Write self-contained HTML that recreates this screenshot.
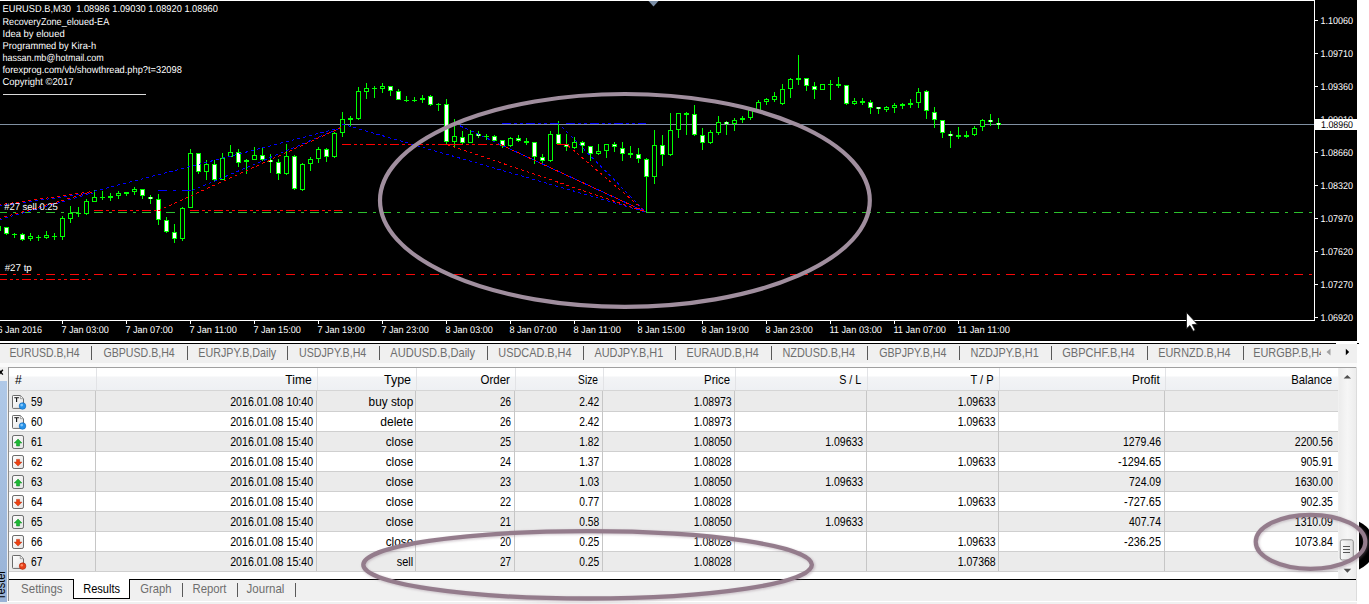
<!DOCTYPE html>
<html><head><meta charset="utf-8"><title>Tester</title>
<style>
html,body{margin:0;padding:0;background:#fff;}
body{width:1369px;height:604px;overflow:hidden;position:relative;font-family:"Liberation Sans",sans-serif;}
.abs{position:absolute;}
#chart{left:0;top:0;width:1357px;height:341px;background:#000;}
#tabs{left:0;top:344px;width:1357px;height:19px;background:#f0f0f0;}
#term{left:0;top:363px;width:1357px;height:238px;background:#f0f0f0;}
#strip{left:0;top:381px;width:7px;height:221px;background:linear-gradient(#b0c9e8,#98b2d6);}
#tbl{left:9px;top:368px;width:1329px;height:211px;background:#fff;}
.hdr{left:0;top:0;width:1329px;height:22px;background:linear-gradient(#fff 0,#fff 8px,#f3f4f6 9px,#eef0f3 22px);border-bottom:1px solid #d5d5d5;}
.row{left:0;width:1329px;height:20px;border-bottom:1px solid #cfcfcf;box-sizing:border-box;}
.odd{background:#ebebeb;}
.even{background:#fff;}
.vs{top:23px;width:1px;height:180px;background:#c6c6c6;}
.hs{top:0px;width:1px;height:22px;background:#e2e3e6;}
#sb{left:1339px;top:368px;width:17px;height:211px;background:linear-gradient(90deg,#ececec,#f6f6f6 50%,#ececec);}
svg{position:absolute;left:0;top:0;}
svg text{font-family:"Liberation Sans",sans-serif;}
</style></head><body>

<div id="chart" class="abs"></div>
<div class="abs" style="left:0;top:343px;width:1336px;height:1px;background:#000"></div>
<div class="abs" style="left:1357px;top:343px;width:2px;height:1px;background:#000"></div>
<div id="tabs" class="abs"></div>
<div id="term" class="abs"></div>
<div class="abs" style="left:0;top:363px;width:1357px;height:4px;background:#fafafa"></div>
<div class="abs" style="left:8px;top:367px;width:1349px;height:1px;background:#a0a0a0"></div>
<div class="abs" style="left:8px;top:367px;width:1px;height:234px;background:#8c8c8c"></div>
<div id="strip" class="abs"></div>
<div class="abs" style="left:1356px;top:367px;width:1px;height:234px;background:#dcdcdc"></div>
<div id="tbl" class="abs">
<div class="abs hdr"></div>
<div class="abs" style="left:0;top:23px;width:1329px;height:1px;background:#ebebeb"></div>
<div class="abs row odd" style="top:24px"></div>
<div class="abs row even" style="top:44px"></div>
<div class="abs row odd" style="top:64px"></div>
<div class="abs row even" style="top:84px"></div>
<div class="abs row odd" style="top:104px"></div>
<div class="abs row even" style="top:124px"></div>
<div class="abs row odd" style="top:144px"></div>
<div class="abs row even" style="top:164px"></div>
<div class="abs row odd" style="top:184px"></div>
<div class="abs vs" style="left:86px"></div>
<div class="abs hs" style="left:87px"></div>
<div class="abs vs" style="left:307px"></div>
<div class="abs hs" style="left:308px"></div>
<div class="abs vs" style="left:406px"></div>
<div class="abs hs" style="left:407px"></div>
<div class="abs vs" style="left:505px"></div>
<div class="abs hs" style="left:506px"></div>
<div class="abs vs" style="left:593px"></div>
<div class="abs hs" style="left:594px"></div>
<div class="abs vs" style="left:725px"></div>
<div class="abs hs" style="left:726px"></div>
<div class="abs vs" style="left:857px"></div>
<div class="abs hs" style="left:858px"></div>
<div class="abs vs" style="left:989px"></div>
<div class="abs hs" style="left:990px"></div>
<div class="abs vs" style="left:1155px"></div>
<div class="abs hs" style="left:1156px"></div>
</div>
<div id="sb" class="abs"></div>
<div class="abs" style="left:0;top:602px;width:1357px;height:2px;background:#f0f0f0"></div>
<div class="abs" style="left:9px;top:579px;width:1347px;height:1px;background:#000"></div>
<div class="abs" style="left:9px;top:580px;width:1347px;height:21px;background:#f0f0f0"></div>
<div class="abs" style="left:73px;top:579px;width:57px;height:20px;background:#fff;border:1px solid #000;border-top:none;box-sizing:border-box"></div>
<svg width="1369" height="604" viewBox="0 0 1369 604">
<g shape-rendering="crispEdges">
<rect x="0" y="0" width="1315" height="1" fill="#fff"/>
<rect x="1314" y="0" width="1" height="321" fill="#fff"/>
<rect x="0" y="320" width="1315" height="1" fill="#fff"/>
<rect x="1315" y="20" width="3" height="1" fill="#fff"/>
<rect x="1315" y="53" width="3" height="1" fill="#fff"/>
<rect x="1315" y="86" width="3" height="1" fill="#fff"/>
<rect x="1315" y="119" width="3" height="1" fill="#fff"/>
<rect x="1315" y="152" width="3" height="1" fill="#fff"/>
<rect x="1315" y="185" width="3" height="1" fill="#fff"/>
<rect x="1315" y="218" width="3" height="1" fill="#fff"/>
<rect x="1315" y="251" width="3" height="1" fill="#fff"/>
<rect x="1315" y="284" width="3" height="1" fill="#fff"/>
<rect x="1315" y="317" width="3" height="1" fill="#fff"/>
<rect x="62" y="321" width="1" height="3" fill="#fff"/>
<rect x="126" y="321" width="1" height="3" fill="#fff"/>
<rect x="190" y="321" width="1" height="3" fill="#fff"/>
<rect x="254" y="321" width="1" height="3" fill="#fff"/>
<rect x="318" y="321" width="1" height="3" fill="#fff"/>
<rect x="382" y="321" width="1" height="3" fill="#fff"/>
<rect x="446" y="321" width="1" height="3" fill="#fff"/>
<rect x="510" y="321" width="1" height="3" fill="#fff"/>
<rect x="574" y="321" width="1" height="3" fill="#fff"/>
<rect x="638" y="321" width="1" height="3" fill="#fff"/>
<rect x="702" y="321" width="1" height="3" fill="#fff"/>
<rect x="766" y="321" width="1" height="3" fill="#fff"/>
<rect x="830" y="321" width="1" height="3" fill="#fff"/>
<rect x="894" y="321" width="1" height="3" fill="#fff"/>
<rect x="958" y="321" width="1" height="3" fill="#fff"/>
</g>
<path d="M648.5 1 L658.5 1 L653.5 6.5 Z" fill="#7b8ea6"/>
<g shape-rendering="crispEdges" fill="none">
<line x1="0" y1="212.5" x2="1314" y2="212.5" stroke="#2cc02c" stroke-width="1" stroke-dasharray="9 6 3 6" stroke-dashoffset="2"/>
<line x1="0" y1="274.5" x2="1314" y2="274.5" stroke="#f80808" stroke-width="1" stroke-dasharray="9 6 3 6" stroke-dashoffset="2"/>
<line x1="0" y1="124.5" x2="1314" y2="124.5" stroke="#8090a2" stroke-width="1"/>
</g>
<g shape-rendering="crispEdges">
<rect x="-4" y="226" width="5" height="5" fill="#00ff00"/>
<rect x="6" y="227" width="1" height="8" fill="#00ff00"/>
<rect x="4" y="227" width="5" height="7" fill="#00ff00"/>
<rect x="5" y="228" width="3" height="5" fill="#fff"/>
<rect x="14" y="233" width="1" height="5" fill="#00ff00"/>
<rect x="12" y="234" width="5" height="1" fill="#00ff00"/>
<rect x="22" y="233" width="1" height="8" fill="#00ff00"/>
<rect x="20" y="234" width="5" height="6" fill="#00ff00"/>
<rect x="21" y="235" width="3" height="4" fill="#fff"/>
<rect x="30" y="233" width="1" height="8" fill="#00ff00"/>
<rect x="28" y="236" width="5" height="3" fill="#00ff00"/>
<rect x="29" y="237" width="3" height="1" fill="#000"/>
<rect x="38" y="235" width="1" height="6" fill="#00ff00"/>
<rect x="36" y="237" width="5" height="1" fill="#00ff00"/>
<rect x="46" y="231" width="1" height="8" fill="#00ff00"/>
<rect x="44" y="235" width="5" height="3" fill="#00ff00"/>
<rect x="45" y="236" width="3" height="1" fill="#000"/>
<rect x="54" y="233" width="1" height="7" fill="#00ff00"/>
<rect x="52" y="236" width="5" height="1" fill="#00ff00"/>
<rect x="62" y="216" width="1" height="24" fill="#00ff00"/>
<rect x="60" y="218" width="5" height="19" fill="#00ff00"/>
<rect x="61" y="219" width="3" height="17" fill="#000"/>
<rect x="70" y="206" width="1" height="17" fill="#00ff00"/>
<rect x="68" y="213" width="5" height="6" fill="#00ff00"/>
<rect x="69" y="214" width="3" height="4" fill="#000"/>
<rect x="78" y="207" width="1" height="10" fill="#00ff00"/>
<rect x="76" y="213" width="5" height="1" fill="#00ff00"/>
<rect x="86" y="199" width="1" height="16" fill="#00ff00"/>
<rect x="84" y="201" width="5" height="13" fill="#00ff00"/>
<rect x="85" y="202" width="3" height="11" fill="#000"/>
<rect x="94" y="190" width="1" height="12" fill="#00ff00"/>
<rect x="92" y="197" width="5" height="5" fill="#00ff00"/>
<rect x="93" y="198" width="3" height="3" fill="#000"/>
<rect x="102" y="191" width="1" height="9" fill="#00ff00"/>
<rect x="100" y="197" width="5" height="1" fill="#00ff00"/>
<rect x="110" y="193" width="1" height="8" fill="#00ff00"/>
<rect x="108" y="196" width="5" height="2" fill="#00ff00"/>
<rect x="118" y="191" width="1" height="8" fill="#00ff00"/>
<rect x="116" y="193" width="5" height="3" fill="#00ff00"/>
<rect x="117" y="194" width="3" height="1" fill="#000"/>
<rect x="126" y="192" width="1" height="4" fill="#00ff00"/>
<rect x="124" y="192" width="5" height="2" fill="#00ff00"/>
<rect x="134" y="187" width="1" height="8" fill="#00ff00"/>
<rect x="132" y="189" width="5" height="3" fill="#00ff00"/>
<rect x="133" y="190" width="3" height="1" fill="#000"/>
<rect x="142" y="189" width="1" height="10" fill="#00ff00"/>
<rect x="140" y="189" width="5" height="7" fill="#00ff00"/>
<rect x="141" y="190" width="3" height="5" fill="#fff"/>
<rect x="150" y="195" width="1" height="9" fill="#00ff00"/>
<rect x="148" y="197" width="5" height="2" fill="#00ff00"/>
<rect x="149" y="197" width="3" height="2" fill="#c8ffc8"/>
<rect x="158" y="194" width="1" height="31" fill="#00ff00"/>
<rect x="156" y="199" width="5" height="21" fill="#00ff00"/>
<rect x="157" y="200" width="3" height="19" fill="#fff"/>
<rect x="166" y="217" width="1" height="16" fill="#00ff00"/>
<rect x="164" y="220" width="5" height="12" fill="#00ff00"/>
<rect x="165" y="221" width="3" height="10" fill="#fff"/>
<rect x="174" y="224" width="1" height="19" fill="#00ff00"/>
<rect x="172" y="232" width="5" height="7" fill="#00ff00"/>
<rect x="173" y="233" width="3" height="5" fill="#fff"/>
<rect x="182" y="207" width="1" height="34" fill="#00ff00"/>
<rect x="180" y="208" width="5" height="31" fill="#00ff00"/>
<rect x="181" y="209" width="3" height="29" fill="#000"/>
<rect x="190" y="149" width="1" height="59" fill="#00ff00"/>
<rect x="188" y="153" width="5" height="55" fill="#00ff00"/>
<rect x="189" y="154" width="3" height="53" fill="#000"/>
<rect x="198" y="153" width="1" height="21" fill="#00ff00"/>
<rect x="196" y="153" width="5" height="19" fill="#00ff00"/>
<rect x="197" y="154" width="3" height="17" fill="#fff"/>
<rect x="206" y="160" width="1" height="20" fill="#00ff00"/>
<rect x="204" y="164" width="5" height="8" fill="#00ff00"/>
<rect x="205" y="165" width="3" height="6" fill="#000"/>
<rect x="214" y="160" width="1" height="22" fill="#00ff00"/>
<rect x="212" y="164" width="5" height="16" fill="#00ff00"/>
<rect x="213" y="165" width="3" height="14" fill="#fff"/>
<rect x="222" y="153" width="1" height="27" fill="#00ff00"/>
<rect x="220" y="158" width="5" height="22" fill="#00ff00"/>
<rect x="221" y="159" width="3" height="20" fill="#000"/>
<rect x="230" y="145" width="1" height="12" fill="#00ff00"/>
<rect x="228" y="152" width="5" height="5" fill="#00ff00"/>
<rect x="229" y="153" width="3" height="3" fill="#000"/>
<rect x="238" y="149" width="1" height="18" fill="#00ff00"/>
<rect x="236" y="152" width="5" height="11" fill="#00ff00"/>
<rect x="237" y="153" width="3" height="9" fill="#fff"/>
<rect x="246" y="159" width="1" height="15" fill="#00ff00"/>
<rect x="244" y="160" width="5" height="2" fill="#00ff00"/>
<rect x="254" y="147" width="1" height="13" fill="#00ff00"/>
<rect x="252" y="155" width="5" height="5" fill="#00ff00"/>
<rect x="253" y="156" width="3" height="3" fill="#000"/>
<rect x="262" y="148" width="1" height="13" fill="#00ff00"/>
<rect x="260" y="155" width="5" height="5" fill="#00ff00"/>
<rect x="261" y="156" width="3" height="3" fill="#fff"/>
<rect x="270" y="154" width="1" height="19" fill="#00ff00"/>
<rect x="268" y="160" width="5" height="2" fill="#00ff00"/>
<rect x="269" y="160" width="3" height="2" fill="#c8ffc8"/>
<rect x="278" y="159" width="1" height="21" fill="#00ff00"/>
<rect x="276" y="162" width="5" height="12" fill="#00ff00"/>
<rect x="277" y="163" width="3" height="10" fill="#fff"/>
<rect x="286" y="144" width="1" height="31" fill="#00ff00"/>
<rect x="284" y="156" width="5" height="18" fill="#00ff00"/>
<rect x="285" y="157" width="3" height="16" fill="#000"/>
<rect x="294" y="155" width="1" height="35" fill="#00ff00"/>
<rect x="292" y="156" width="5" height="33" fill="#00ff00"/>
<rect x="293" y="157" width="3" height="31" fill="#fff"/>
<rect x="302" y="163" width="1" height="28" fill="#00ff00"/>
<rect x="300" y="164" width="5" height="26" fill="#00ff00"/>
<rect x="301" y="165" width="3" height="24" fill="#000"/>
<rect x="310" y="157" width="1" height="14" fill="#00ff00"/>
<rect x="308" y="159" width="5" height="5" fill="#00ff00"/>
<rect x="309" y="160" width="3" height="3" fill="#000"/>
<rect x="318" y="147" width="1" height="16" fill="#00ff00"/>
<rect x="316" y="149" width="5" height="10" fill="#00ff00"/>
<rect x="317" y="150" width="3" height="8" fill="#000"/>
<rect x="326" y="148" width="1" height="14" fill="#00ff00"/>
<rect x="324" y="149" width="5" height="8" fill="#00ff00"/>
<rect x="325" y="150" width="3" height="6" fill="#fff"/>
<rect x="334" y="132" width="1" height="26" fill="#00ff00"/>
<rect x="332" y="133" width="5" height="24" fill="#00ff00"/>
<rect x="333" y="134" width="3" height="22" fill="#000"/>
<rect x="342" y="112" width="1" height="25" fill="#00ff00"/>
<rect x="340" y="119" width="5" height="14" fill="#00ff00"/>
<rect x="341" y="120" width="3" height="12" fill="#000"/>
<rect x="350" y="116" width="1" height="11" fill="#00ff00"/>
<rect x="348" y="118" width="5" height="2" fill="#00ff00"/>
<rect x="358" y="87" width="1" height="33" fill="#00ff00"/>
<rect x="356" y="91" width="5" height="28" fill="#00ff00"/>
<rect x="357" y="92" width="3" height="26" fill="#000"/>
<rect x="366" y="83" width="1" height="16" fill="#00ff00"/>
<rect x="364" y="88" width="5" height="4" fill="#00ff00"/>
<rect x="365" y="89" width="3" height="2" fill="#000"/>
<rect x="374" y="86" width="1" height="12" fill="#00ff00"/>
<rect x="372" y="88" width="5" height="1" fill="#00ff00"/>
<rect x="382" y="83" width="1" height="10" fill="#00ff00"/>
<rect x="380" y="86" width="5" height="3" fill="#00ff00"/>
<rect x="381" y="87" width="3" height="1" fill="#000"/>
<rect x="390" y="86" width="1" height="10" fill="#00ff00"/>
<rect x="388" y="86" width="5" height="5" fill="#00ff00"/>
<rect x="389" y="87" width="3" height="3" fill="#fff"/>
<rect x="398" y="89" width="1" height="11" fill="#00ff00"/>
<rect x="396" y="91" width="5" height="9" fill="#00ff00"/>
<rect x="397" y="92" width="3" height="7" fill="#fff"/>
<rect x="406" y="96" width="1" height="6" fill="#00ff00"/>
<rect x="404" y="100" width="5" height="1" fill="#00ff00"/>
<rect x="414" y="97" width="1" height="5" fill="#00ff00"/>
<rect x="412" y="100" width="5" height="1" fill="#00ff00"/>
<rect x="422" y="95" width="1" height="8" fill="#00ff00"/>
<rect x="420" y="98" width="5" height="2" fill="#00ff00"/>
<rect x="430" y="95" width="1" height="11" fill="#00ff00"/>
<rect x="428" y="96" width="5" height="9" fill="#00ff00"/>
<rect x="429" y="97" width="3" height="7" fill="#fff"/>
<rect x="438" y="103" width="1" height="8" fill="#00ff00"/>
<rect x="436" y="104" width="5" height="1" fill="#00ff00"/>
<rect x="446" y="99" width="1" height="45" fill="#00ff00"/>
<rect x="444" y="104" width="5" height="38" fill="#00ff00"/>
<rect x="445" y="105" width="3" height="36" fill="#fff"/>
<rect x="454" y="119" width="1" height="29" fill="#00ff00"/>
<rect x="452" y="136" width="5" height="6" fill="#00ff00"/>
<rect x="453" y="137" width="3" height="4" fill="#000"/>
<rect x="462" y="131" width="1" height="13" fill="#00ff00"/>
<rect x="460" y="137" width="5" height="6" fill="#00ff00"/>
<rect x="461" y="138" width="3" height="4" fill="#fff"/>
<rect x="470" y="130" width="1" height="13" fill="#00ff00"/>
<rect x="468" y="134" width="5" height="9" fill="#00ff00"/>
<rect x="469" y="135" width="3" height="7" fill="#000"/>
<rect x="478" y="131" width="1" height="7" fill="#00ff00"/>
<rect x="476" y="134" width="5" height="2" fill="#00ff00"/>
<rect x="477" y="134" width="3" height="2" fill="#c8ffc8"/>
<rect x="486" y="134" width="1" height="6" fill="#00ff00"/>
<rect x="484" y="136" width="5" height="1" fill="#00ff00"/>
<rect x="494" y="135" width="1" height="7" fill="#00ff00"/>
<rect x="492" y="136" width="5" height="5" fill="#00ff00"/>
<rect x="493" y="137" width="3" height="3" fill="#fff"/>
<rect x="502" y="140" width="1" height="8" fill="#00ff00"/>
<rect x="500" y="140" width="5" height="6" fill="#00ff00"/>
<rect x="501" y="141" width="3" height="4" fill="#fff"/>
<rect x="510" y="137" width="1" height="10" fill="#00ff00"/>
<rect x="508" y="138" width="5" height="8" fill="#00ff00"/>
<rect x="509" y="139" width="3" height="6" fill="#000"/>
<rect x="518" y="135" width="1" height="7" fill="#00ff00"/>
<rect x="516" y="138" width="5" height="3" fill="#00ff00"/>
<rect x="517" y="139" width="3" height="1" fill="#fff"/>
<rect x="526" y="138" width="1" height="7" fill="#00ff00"/>
<rect x="524" y="141" width="5" height="2" fill="#00ff00"/>
<rect x="534" y="142" width="1" height="22" fill="#00ff00"/>
<rect x="532" y="142" width="5" height="15" fill="#00ff00"/>
<rect x="533" y="143" width="3" height="13" fill="#fff"/>
<rect x="542" y="154" width="1" height="10" fill="#00ff00"/>
<rect x="540" y="157" width="5" height="4" fill="#00ff00"/>
<rect x="541" y="158" width="3" height="2" fill="#fff"/>
<rect x="550" y="131" width="1" height="31" fill="#00ff00"/>
<rect x="548" y="134" width="5" height="27" fill="#00ff00"/>
<rect x="549" y="135" width="3" height="25" fill="#000"/>
<rect x="558" y="121" width="1" height="23" fill="#00ff00"/>
<rect x="556" y="134" width="5" height="10" fill="#00ff00"/>
<rect x="557" y="135" width="3" height="8" fill="#fff"/>
<rect x="566" y="134" width="1" height="17" fill="#00ff00"/>
<rect x="564" y="144" width="5" height="3" fill="#00ff00"/>
<rect x="565" y="145" width="3" height="1" fill="#fff"/>
<rect x="574" y="137" width="1" height="12" fill="#00ff00"/>
<rect x="572" y="142" width="5" height="6" fill="#00ff00"/>
<rect x="573" y="143" width="3" height="4" fill="#000"/>
<rect x="582" y="141" width="1" height="12" fill="#00ff00"/>
<rect x="580" y="142" width="5" height="4" fill="#00ff00"/>
<rect x="581" y="143" width="3" height="2" fill="#fff"/>
<rect x="590" y="146" width="1" height="15" fill="#00ff00"/>
<rect x="588" y="146" width="5" height="8" fill="#00ff00"/>
<rect x="589" y="147" width="3" height="6" fill="#fff"/>
<rect x="598" y="144" width="1" height="11" fill="#00ff00"/>
<rect x="596" y="151" width="5" height="3" fill="#00ff00"/>
<rect x="597" y="152" width="3" height="1" fill="#000"/>
<rect x="606" y="144" width="1" height="14" fill="#00ff00"/>
<rect x="604" y="144" width="5" height="7" fill="#00ff00"/>
<rect x="605" y="145" width="3" height="5" fill="#000"/>
<rect x="614" y="142" width="1" height="10" fill="#00ff00"/>
<rect x="612" y="144" width="5" height="3" fill="#00ff00"/>
<rect x="613" y="145" width="3" height="1" fill="#fff"/>
<rect x="622" y="142" width="1" height="19" fill="#00ff00"/>
<rect x="620" y="148" width="5" height="6" fill="#00ff00"/>
<rect x="621" y="149" width="3" height="4" fill="#fff"/>
<rect x="630" y="146" width="1" height="12" fill="#00ff00"/>
<rect x="628" y="153" width="5" height="2" fill="#00ff00"/>
<rect x="638" y="148" width="1" height="15" fill="#00ff00"/>
<rect x="636" y="154" width="5" height="5" fill="#00ff00"/>
<rect x="637" y="155" width="3" height="3" fill="#fff"/>
<rect x="646" y="158" width="1" height="54" fill="#00ff00"/>
<rect x="644" y="159" width="5" height="18" fill="#00ff00"/>
<rect x="645" y="160" width="3" height="16" fill="#fff"/>
<rect x="654" y="130" width="1" height="54" fill="#00ff00"/>
<rect x="652" y="145" width="5" height="32" fill="#00ff00"/>
<rect x="653" y="146" width="3" height="30" fill="#000"/>
<rect x="662" y="135" width="1" height="31" fill="#00ff00"/>
<rect x="660" y="145" width="5" height="10" fill="#00ff00"/>
<rect x="661" y="146" width="3" height="8" fill="#fff"/>
<rect x="670" y="113" width="1" height="43" fill="#00ff00"/>
<rect x="668" y="130" width="5" height="25" fill="#00ff00"/>
<rect x="669" y="131" width="3" height="23" fill="#000"/>
<rect x="678" y="113" width="1" height="25" fill="#00ff00"/>
<rect x="676" y="113" width="5" height="17" fill="#00ff00"/>
<rect x="677" y="114" width="3" height="15" fill="#000"/>
<rect x="686" y="112" width="1" height="23" fill="#00ff00"/>
<rect x="684" y="113" width="5" height="2" fill="#00ff00"/>
<rect x="694" y="105" width="1" height="31" fill="#00ff00"/>
<rect x="692" y="114" width="5" height="21" fill="#00ff00"/>
<rect x="693" y="115" width="3" height="19" fill="#fff"/>
<rect x="702" y="128" width="1" height="22" fill="#00ff00"/>
<rect x="700" y="135" width="5" height="8" fill="#00ff00"/>
<rect x="701" y="136" width="3" height="6" fill="#fff"/>
<rect x="710" y="130" width="1" height="14" fill="#00ff00"/>
<rect x="708" y="132" width="5" height="11" fill="#00ff00"/>
<rect x="709" y="133" width="3" height="9" fill="#000"/>
<rect x="718" y="116" width="1" height="19" fill="#00ff00"/>
<rect x="716" y="122" width="5" height="11" fill="#00ff00"/>
<rect x="717" y="123" width="3" height="9" fill="#000"/>
<rect x="726" y="121" width="1" height="14" fill="#00ff00"/>
<rect x="724" y="122" width="5" height="2" fill="#00ff00"/>
<rect x="725" y="122" width="3" height="2" fill="#c8ffc8"/>
<rect x="734" y="118" width="1" height="13" fill="#00ff00"/>
<rect x="732" y="120" width="5" height="4" fill="#00ff00"/>
<rect x="733" y="121" width="3" height="2" fill="#000"/>
<rect x="742" y="116" width="1" height="7" fill="#00ff00"/>
<rect x="740" y="118" width="5" height="2" fill="#00ff00"/>
<rect x="750" y="110" width="1" height="10" fill="#00ff00"/>
<rect x="748" y="110" width="5" height="8" fill="#00ff00"/>
<rect x="749" y="111" width="3" height="6" fill="#000"/>
<rect x="758" y="100" width="1" height="11" fill="#00ff00"/>
<rect x="756" y="102" width="5" height="9" fill="#00ff00"/>
<rect x="757" y="103" width="3" height="7" fill="#000"/>
<rect x="766" y="98" width="1" height="7" fill="#00ff00"/>
<rect x="764" y="99" width="5" height="3" fill="#00ff00"/>
<rect x="765" y="100" width="3" height="1" fill="#000"/>
<rect x="774" y="92" width="1" height="10" fill="#00ff00"/>
<rect x="772" y="96" width="5" height="4" fill="#00ff00"/>
<rect x="773" y="97" width="3" height="2" fill="#000"/>
<rect x="782" y="84" width="1" height="21" fill="#00ff00"/>
<rect x="780" y="89" width="5" height="15" fill="#00ff00"/>
<rect x="781" y="90" width="3" height="13" fill="#000"/>
<rect x="790" y="78" width="1" height="20" fill="#00ff00"/>
<rect x="788" y="79" width="5" height="10" fill="#00ff00"/>
<rect x="789" y="80" width="3" height="8" fill="#000"/>
<rect x="798" y="55" width="1" height="30" fill="#00ff00"/>
<rect x="796" y="78" width="5" height="2" fill="#00ff00"/>
<rect x="806" y="78" width="1" height="13" fill="#00ff00"/>
<rect x="804" y="78" width="5" height="8" fill="#00ff00"/>
<rect x="805" y="79" width="3" height="6" fill="#fff"/>
<rect x="814" y="82" width="1" height="17" fill="#00ff00"/>
<rect x="812" y="86" width="5" height="4" fill="#00ff00"/>
<rect x="813" y="87" width="3" height="2" fill="#fff"/>
<rect x="822" y="84" width="1" height="6" fill="#00ff00"/>
<rect x="820" y="84" width="5" height="6" fill="#00ff00"/>
<rect x="821" y="85" width="3" height="4" fill="#000"/>
<rect x="830" y="80" width="1" height="20" fill="#00ff00"/>
<rect x="828" y="84" width="5" height="1" fill="#00ff00"/>
<rect x="838" y="77" width="1" height="11" fill="#00ff00"/>
<rect x="836" y="84" width="5" height="2" fill="#00ff00"/>
<rect x="846" y="85" width="1" height="20" fill="#00ff00"/>
<rect x="844" y="85" width="5" height="19" fill="#00ff00"/>
<rect x="845" y="86" width="3" height="17" fill="#fff"/>
<rect x="854" y="98" width="1" height="7" fill="#00ff00"/>
<rect x="852" y="101" width="5" height="3" fill="#00ff00"/>
<rect x="853" y="102" width="3" height="1" fill="#000"/>
<rect x="862" y="98" width="1" height="7" fill="#00ff00"/>
<rect x="860" y="101" width="5" height="2" fill="#00ff00"/>
<rect x="870" y="100" width="1" height="14" fill="#00ff00"/>
<rect x="868" y="102" width="5" height="6" fill="#00ff00"/>
<rect x="869" y="103" width="3" height="4" fill="#fff"/>
<rect x="878" y="107" width="1" height="7" fill="#00ff00"/>
<rect x="876" y="107" width="5" height="2" fill="#00ff00"/>
<rect x="877" y="107" width="3" height="2" fill="#c8ffc8"/>
<rect x="886" y="106" width="1" height="6" fill="#00ff00"/>
<rect x="884" y="107" width="5" height="3" fill="#00ff00"/>
<rect x="885" y="108" width="3" height="1" fill="#000"/>
<rect x="894" y="103" width="1" height="10" fill="#00ff00"/>
<rect x="892" y="105" width="5" height="3" fill="#00ff00"/>
<rect x="893" y="106" width="3" height="1" fill="#000"/>
<rect x="902" y="103" width="1" height="6" fill="#00ff00"/>
<rect x="900" y="104" width="5" height="2" fill="#00ff00"/>
<rect x="910" y="99" width="1" height="9" fill="#00ff00"/>
<rect x="908" y="103" width="5" height="2" fill="#00ff00"/>
<rect x="918" y="88" width="1" height="20" fill="#00ff00"/>
<rect x="916" y="92" width="5" height="11" fill="#00ff00"/>
<rect x="917" y="93" width="3" height="9" fill="#000"/>
<rect x="926" y="90" width="1" height="29" fill="#00ff00"/>
<rect x="924" y="91" width="5" height="20" fill="#00ff00"/>
<rect x="925" y="92" width="3" height="18" fill="#fff"/>
<rect x="934" y="107" width="1" height="21" fill="#00ff00"/>
<rect x="932" y="112" width="5" height="8" fill="#00ff00"/>
<rect x="933" y="113" width="3" height="6" fill="#fff"/>
<rect x="942" y="120" width="1" height="18" fill="#00ff00"/>
<rect x="940" y="120" width="5" height="13" fill="#00ff00"/>
<rect x="941" y="121" width="3" height="11" fill="#fff"/>
<rect x="950" y="131" width="1" height="17" fill="#00ff00"/>
<rect x="948" y="134" width="5" height="2" fill="#00ff00"/>
<rect x="949" y="134" width="3" height="2" fill="#c8ffc8"/>
<rect x="958" y="127" width="1" height="12" fill="#00ff00"/>
<rect x="956" y="135" width="5" height="2" fill="#00ff00"/>
<rect x="966" y="131" width="1" height="7" fill="#00ff00"/>
<rect x="964" y="135" width="5" height="2" fill="#00ff00"/>
<rect x="974" y="126" width="1" height="10" fill="#00ff00"/>
<rect x="972" y="128" width="5" height="7" fill="#00ff00"/>
<rect x="973" y="129" width="3" height="5" fill="#000"/>
<rect x="982" y="119" width="1" height="12" fill="#00ff00"/>
<rect x="980" y="120" width="5" height="7" fill="#00ff00"/>
<rect x="981" y="121" width="3" height="5" fill="#000"/>
<rect x="990" y="114" width="1" height="12" fill="#00ff00"/>
<rect x="988" y="120" width="5" height="2" fill="#00ff00"/>
<rect x="989" y="120" width="3" height="2" fill="#c8ffc8"/>
<rect x="998" y="118" width="1" height="11" fill="#00ff00"/>
<rect x="996" y="123" width="5" height="2" fill="#00ff00"/>
<rect x="997" y="123" width="3" height="2" fill="#c8ffc8"/>
</g>
<g shape-rendering="crispEdges" fill="none">
<line x1="0" y1="279.5" x2="92" y2="279.5" stroke="#ff0000" stroke-width="1" stroke-dasharray="9 3 3 3 3 3" stroke-dashoffset="2"/>
<line x1="94" y1="210.5" x2="161" y2="210.5" stroke="#ff0000" stroke-width="1" stroke-dasharray="9 3 3 3 3 3"/>
<line x1="190" y1="210.5" x2="342" y2="210.5" stroke="#ff0000" stroke-width="1" stroke-dasharray="9 3 3 3 3 3"/>
<line x1="342" y1="144.5" x2="453" y2="144.5" stroke="#ff0000" stroke-width="1" stroke-dasharray="9 3 3 3 3 3"/>
<line x1="454" y1="144.5" x2="501" y2="144.5" stroke="#ff0000" stroke-width="1" stroke-dasharray="9 3 3 3 3 3"/>
<line x1="447" y1="144.5" x2="463" y2="144.5" stroke="#ff0000" stroke-width="1"/>
<line x1="557" y1="144.5" x2="568" y2="144.5" stroke="#ff0000" stroke-width="1"/>
<line x1="502" y1="123.5" x2="559" y2="123.5" stroke="#0000ff" stroke-width="1" stroke-dasharray="9 3 3 3 3 3"/>
<line x1="566" y1="123.5" x2="646" y2="123.5" stroke="#0000ff" stroke-width="1" stroke-dasharray="9 3 3 3 3 3"/>
<line x1="158" y1="190.5" x2="192" y2="190.5" stroke="#0000ff" stroke-width="1" stroke-dasharray="9 6 3 6"/>
<line x1="-2" y1="205" x2="92" y2="191.6" stroke="#ff0000" stroke-width="1" stroke-dasharray="3 3"/>
<line x1="-1" y1="206" x2="93" y2="192.6" stroke="#0000ff" stroke-width="1" stroke-dasharray="3 3"/>
<line x1="-2" y1="218.8" x2="92" y2="191.9" stroke="#ff0000" stroke-width="1" stroke-dasharray="3 3"/>
<line x1="-1" y1="219.8" x2="93" y2="192.9" stroke="#0000ff" stroke-width="1" stroke-dasharray="3 3"/>
<line x1="94" y1="191.3" x2="341.5" y2="127.5" stroke="#0000ff" stroke-width="1" stroke-dasharray="3 3"/>
<line x1="192" y1="190.6" x2="341.5" y2="127.5" stroke="#0000ff" stroke-width="1" stroke-dasharray="3 3"/>
<line x1="158" y1="210.8" x2="341.5" y2="127.5" stroke="#ff0000" stroke-width="1" stroke-dasharray="3 3"/>
<line x1="342" y1="124" x2="646" y2="212" stroke="#0000ff" stroke-width="1" stroke-dasharray="3 3"/>
<line x1="460" y1="125.8" x2="646" y2="212" stroke="#0000ff" stroke-width="1" stroke-dasharray="3 3"/>
<line x1="447" y1="144.5" x2="646" y2="212" stroke="#ff0000" stroke-width="1" stroke-dasharray="3 3"/>
<line x1="501" y1="144.8" x2="646" y2="212" stroke="#ff0000" stroke-width="1" stroke-dasharray="3 3" stroke-dashoffset="0.2"/>
<line x1="568" y1="145.6" x2="646" y2="212" stroke="#ff0000" stroke-width="1" stroke-dasharray="3 3"/>
<line x1="560" y1="125" x2="646" y2="212" stroke="#0000ff" stroke-width="1" stroke-dasharray="3 3" stroke-dashoffset="3"/>
</g>
<g style="white-space:pre" text-rendering="geometricPrecision">
<text x="2.5" y="11.8" font-size="10" fill="#fff" textLength="215.4" lengthAdjust="spacingAndGlyphs" xml:space="preserve">EURUSD.B,M30  1.08986 1.09030 1.08920 1.08960</text>
<text x="2.5" y="24.8" font-size="10" fill="#fff" textLength="106.7" lengthAdjust="spacingAndGlyphs" xml:space="preserve">RecoveryZone_eloued-EA</text>
<text x="2.5" y="36.7" font-size="10" fill="#fff" textLength="62.2" lengthAdjust="spacingAndGlyphs" xml:space="preserve">Idea by eloued</text>
<text x="2.5" y="48.7" font-size="10" fill="#fff" textLength="93.6" lengthAdjust="spacingAndGlyphs" xml:space="preserve">Programmed by Kira-h</text>
<text x="2.5" y="60.6" font-size="10" fill="#fff" textLength="101.3" lengthAdjust="spacingAndGlyphs" xml:space="preserve">hassan.mb@hotmail.com</text>
<text x="2.5" y="72.6" font-size="10" fill="#fff" textLength="179.3" lengthAdjust="spacingAndGlyphs" xml:space="preserve">forexprog.com/vb/showthread.php?t=32098</text>
<text x="2.5" y="84.6" font-size="10" fill="#fff" textLength="70.9" lengthAdjust="spacingAndGlyphs" xml:space="preserve">Copyright ©2017</text>
</g>
<g shape-rendering="crispEdges"><line x1="2.5" y1="94.5" x2="146" y2="94.5" stroke="#dadada" stroke-width="1"/></g>
<g text-rendering="geometricPrecision">
<text x="4.2" y="209.7" font-size="9.7" fill="#fff" textLength="53.7" lengthAdjust="spacingAndGlyphs">#27 sell 0.25</text>
<text x="4.7" y="271.4" font-size="9.7" fill="#fff" textLength="27.1" lengthAdjust="spacingAndGlyphs">#27 tp</text>
<text x="1320.5" y="23.8" font-size="9.8" fill="#fff" textLength="32.5" lengthAdjust="spacingAndGlyphs">1.10060</text>
<text x="1320.5" y="56.8" font-size="9.8" fill="#fff" textLength="32.5" lengthAdjust="spacingAndGlyphs">1.09710</text>
<text x="1320.5" y="89.8" font-size="9.8" fill="#fff" textLength="32.5" lengthAdjust="spacingAndGlyphs">1.09360</text>
<text x="1320.5" y="122.8" font-size="9.8" fill="#fff" textLength="32.5" lengthAdjust="spacingAndGlyphs">1.09010</text>
<text x="1320.5" y="155.8" font-size="9.8" fill="#fff" textLength="32.5" lengthAdjust="spacingAndGlyphs">1.08660</text>
<text x="1320.5" y="188.8" font-size="9.8" fill="#fff" textLength="32.5" lengthAdjust="spacingAndGlyphs">1.08320</text>
<text x="1320.5" y="221.8" font-size="9.8" fill="#fff" textLength="32.5" lengthAdjust="spacingAndGlyphs">1.07970</text>
<text x="1320.5" y="254.8" font-size="9.8" fill="#fff" textLength="32.5" lengthAdjust="spacingAndGlyphs">1.07620</text>
<text x="1320.5" y="287.8" font-size="9.8" fill="#fff" textLength="32.5" lengthAdjust="spacingAndGlyphs">1.07270</text>
<text x="1320.5" y="320.8" font-size="9.8" fill="#fff" textLength="32.5" lengthAdjust="spacingAndGlyphs">1.06920</text>
<rect x="1315" y="119" width="42" height="11" fill="#fff"/>
<text x="1321" y="127.8" font-size="9.8" fill="#000" textLength="32" lengthAdjust="spacingAndGlyphs">1.08960</text>
<text x="-2.5" y="332.9" font-size="9.8" fill="#fff" textLength="44.5" lengthAdjust="spacingAndGlyphs">6 Jan 2016</text>
<text x="61.4" y="332.9" font-size="9.8" fill="#fff" textLength="47.4" lengthAdjust="spacingAndGlyphs">7 Jan 03:00</text>
<text x="125.4" y="332.9" font-size="9.8" fill="#fff" textLength="47.4" lengthAdjust="spacingAndGlyphs">7 Jan 07:00</text>
<text x="189.4" y="332.9" font-size="9.8" fill="#fff" textLength="47.4" lengthAdjust="spacingAndGlyphs">7 Jan 11:00</text>
<text x="253.4" y="332.9" font-size="9.8" fill="#fff" textLength="47.4" lengthAdjust="spacingAndGlyphs">7 Jan 15:00</text>
<text x="317.4" y="332.9" font-size="9.8" fill="#fff" textLength="47.4" lengthAdjust="spacingAndGlyphs">7 Jan 19:00</text>
<text x="381.4" y="332.9" font-size="9.8" fill="#fff" textLength="47.4" lengthAdjust="spacingAndGlyphs">7 Jan 23:00</text>
<text x="445.4" y="332.9" font-size="9.8" fill="#fff" textLength="47.4" lengthAdjust="spacingAndGlyphs">8 Jan 03:00</text>
<text x="509.4" y="332.9" font-size="9.8" fill="#fff" textLength="47.4" lengthAdjust="spacingAndGlyphs">8 Jan 07:00</text>
<text x="573.4" y="332.9" font-size="9.8" fill="#fff" textLength="47.4" lengthAdjust="spacingAndGlyphs">8 Jan 11:00</text>
<text x="637.4" y="332.9" font-size="9.8" fill="#fff" textLength="47.4" lengthAdjust="spacingAndGlyphs">8 Jan 15:00</text>
<text x="701.4" y="332.9" font-size="9.8" fill="#fff" textLength="47.4" lengthAdjust="spacingAndGlyphs">8 Jan 19:00</text>
<text x="765.4" y="332.9" font-size="9.8" fill="#fff" textLength="47.4" lengthAdjust="spacingAndGlyphs">8 Jan 23:00</text>
<text x="829.4" y="332.9" font-size="9.8" fill="#fff" textLength="52.6" lengthAdjust="spacingAndGlyphs">11 Jan 03:00</text>
<text x="893.4" y="332.9" font-size="9.8" fill="#fff" textLength="52.6" lengthAdjust="spacingAndGlyphs">11 Jan 07:00</text>
<text x="957.4" y="332.9" font-size="9.8" fill="#fff" textLength="52.6" lengthAdjust="spacingAndGlyphs">11 Jan 11:00</text>
</g>
<ellipse cx="624.9" cy="200.4" rx="244.9" ry="106.4" fill="none" stroke="#a08e9e" stroke-width="4.2"/>
<path d="M1186.5 312.5 L1186.5 328.7 L1189.9 325.6 L1193.3 331.2 L1195.2 330.2 L1192.3 324.6 L1197.4 324.2 Z" fill="#fff" stroke="#111" stroke-width="0.8"/>
<clipPath id="tc"><rect x="0" y="344" width="1321" height="20"/></clipPath>
<g clip-path="url(#tc)">
<text x="9.4" y="357.2" font-size="12.4" fill="#6e6e6e" textLength="70.2" lengthAdjust="spacingAndGlyphs">EURUSD.B,H4</text>
<text x="103.5" y="357.2" font-size="12.4" fill="#6e6e6e" textLength="71.2" lengthAdjust="spacingAndGlyphs">GBPUSD.B,H4</text>
<text x="198.3" y="357.2" font-size="12.4" fill="#6e6e6e" textLength="77.9" lengthAdjust="spacingAndGlyphs">EURJPY.B,Daily</text>
<text x="299" y="357.2" font-size="12.4" fill="#6e6e6e" textLength="67.3" lengthAdjust="spacingAndGlyphs">USDJPY.B,H4</text>
<text x="390.3" y="357.2" font-size="12.4" fill="#6e6e6e" textLength="84.8" lengthAdjust="spacingAndGlyphs">AUDUSD.B,Daily</text>
<text x="498.3" y="357.2" font-size="12.4" fill="#6e6e6e" textLength="73.2" lengthAdjust="spacingAndGlyphs">USDCAD.B,H4</text>
<text x="594.4" y="357.2" font-size="12.4" fill="#6e6e6e" textLength="68.9" lengthAdjust="spacingAndGlyphs">AUDJPY.B,H1</text>
<text x="686.5" y="357.2" font-size="12.4" fill="#6e6e6e" textLength="72.2" lengthAdjust="spacingAndGlyphs">EURAUD.B,H4</text>
<text x="782.5" y="357.2" font-size="12.4" fill="#6e6e6e" textLength="72.5" lengthAdjust="spacingAndGlyphs">NZDUSD.B,H4</text>
<text x="879.2" y="357.2" font-size="12.4" fill="#6e6e6e" textLength="67.2" lengthAdjust="spacingAndGlyphs">GBPJPY.B,H4</text>
<text x="970.6" y="357.2" font-size="12.4" fill="#6e6e6e" textLength="68.2" lengthAdjust="spacingAndGlyphs">NZDJPY.B,H1</text>
<text x="1062.3" y="357.2" font-size="12.4" fill="#6e6e6e" textLength="72.3" lengthAdjust="spacingAndGlyphs">GBPCHF.B,H4</text>
<text x="1158.3" y="357.2" font-size="12.4" fill="#6e6e6e" textLength="72.3" lengthAdjust="spacingAndGlyphs">EURNZD.B,H4</text>
<text x="1253.2" y="357.2" font-size="12.4" fill="#6e6e6e" textLength="72.0" lengthAdjust="spacingAndGlyphs">EURGBP.B,H4</text>
</g>
<g shape-rendering="crispEdges">
<rect x="91" y="346" width="1" height="14" fill="#5a5a5a"/>
<rect x="187" y="346" width="1" height="14" fill="#5a5a5a"/>
<rect x="287" y="346" width="1" height="14" fill="#5a5a5a"/>
<rect x="379" y="346" width="1" height="14" fill="#5a5a5a"/>
<rect x="487" y="346" width="1" height="14" fill="#5a5a5a"/>
<rect x="583" y="346" width="1" height="14" fill="#5a5a5a"/>
<rect x="675" y="346" width="1" height="14" fill="#5a5a5a"/>
<rect x="771" y="346" width="1" height="14" fill="#5a5a5a"/>
<rect x="867" y="346" width="1" height="14" fill="#5a5a5a"/>
<rect x="959" y="346" width="1" height="14" fill="#5a5a5a"/>
<rect x="1051" y="346" width="1" height="14" fill="#5a5a5a"/>
<rect x="1147" y="346" width="1" height="14" fill="#5a5a5a"/>
<rect x="1243" y="346" width="1" height="14" fill="#5a5a5a"/>
</g>
<path d="M1330.5 348.5 L1330.5 355.5 L1326.5 352 Z" fill="#a0a0a0"/>
<path d="M1345.8 348.8 L1345.8 355.2 L1349.2 352 Z" fill="#000"/>
<path d="M-1 369.8 L2.8 374.6 M2.8 369.8 L-1 374.6" stroke="#000" stroke-width="1.4" fill="none"/>
<text transform="translate(5,600) rotate(-90)" font-size="12.4" fill="#000" textLength="30" lengthAdjust="spacingAndGlyphs">Tester</text>
<text x="15" y="383.8" font-size="12.4" fill="#000" textLength="6.8" lengthAdjust="spacingAndGlyphs">#</text>
<text x="311.8" y="383.8" font-size="12.4" fill="#000" textLength="26.5" lengthAdjust="spacingAndGlyphs" text-anchor="end">Time</text>
<text x="411" y="383.8" font-size="12.4" fill="#000" textLength="27" lengthAdjust="spacingAndGlyphs" text-anchor="end">Type</text>
<text x="509.9" y="383.8" font-size="12.4" fill="#000" textLength="29.3" lengthAdjust="spacingAndGlyphs" text-anchor="end">Order</text>
<text x="597.9" y="383.8" font-size="12.4" fill="#000" textLength="19.8" lengthAdjust="spacingAndGlyphs" text-anchor="end">Size</text>
<text x="730" y="383.8" font-size="12.4" fill="#000" textLength="25.9" lengthAdjust="spacingAndGlyphs" text-anchor="end">Price</text>
<text x="861.3" y="383.8" font-size="12.4" fill="#000" textLength="22.1" lengthAdjust="spacingAndGlyphs" text-anchor="end">S / L</text>
<text x="993.6" y="383.8" font-size="12.4" fill="#000" textLength="23.2" lengthAdjust="spacingAndGlyphs" text-anchor="end">T / P</text>
<text x="1159.7" y="383.8" font-size="12.4" fill="#000" textLength="27.7" lengthAdjust="spacingAndGlyphs" text-anchor="end">Profit</text>
<text x="1332.1" y="383.8" font-size="12.4" fill="#000" textLength="40.9" lengthAdjust="spacingAndGlyphs" text-anchor="end">Balance</text>
<text x="31" y="405.8" font-size="12.4" fill="#000" textLength="11.4" lengthAdjust="spacingAndGlyphs">59</text>
<text x="313.2" y="405.8" font-size="12.4" fill="#000" textLength="83" lengthAdjust="spacingAndGlyphs" text-anchor="end">2016.01.08 10:40</text>
<text x="413.2" y="405.8" font-size="12.4" fill="#000" textLength="44.6" lengthAdjust="spacingAndGlyphs" text-anchor="end">buy stop</text>
<text x="511" y="405.8" font-size="12.4" fill="#000" textLength="11" lengthAdjust="spacingAndGlyphs" text-anchor="end">26</text>
<text x="599.3" y="405.8" font-size="12.4" fill="#000" textLength="20" lengthAdjust="spacingAndGlyphs" text-anchor="end">2.42</text>
<text x="731.7" y="405.8" font-size="12.4" fill="#000" textLength="38" lengthAdjust="spacingAndGlyphs" text-anchor="end">1.08973</text>
<text x="995.7" y="405.8" font-size="12.4" fill="#000" textLength="38" lengthAdjust="spacingAndGlyphs" text-anchor="end">1.09633</text>
<text x="31" y="425.8" font-size="12.4" fill="#000" textLength="11.4" lengthAdjust="spacingAndGlyphs">60</text>
<text x="313.2" y="425.8" font-size="12.4" fill="#000" textLength="83" lengthAdjust="spacingAndGlyphs" text-anchor="end">2016.01.08 15:40</text>
<text x="413.2" y="425.8" font-size="12.4" fill="#000" textLength="33" lengthAdjust="spacingAndGlyphs" text-anchor="end">delete</text>
<text x="511" y="425.8" font-size="12.4" fill="#000" textLength="11" lengthAdjust="spacingAndGlyphs" text-anchor="end">26</text>
<text x="599.3" y="425.8" font-size="12.4" fill="#000" textLength="20" lengthAdjust="spacingAndGlyphs" text-anchor="end">2.42</text>
<text x="731.7" y="425.8" font-size="12.4" fill="#000" textLength="38" lengthAdjust="spacingAndGlyphs" text-anchor="end">1.08973</text>
<text x="995.7" y="425.8" font-size="12.4" fill="#000" textLength="38" lengthAdjust="spacingAndGlyphs" text-anchor="end">1.09633</text>
<text x="31" y="445.8" font-size="12.4" fill="#000" textLength="11.4" lengthAdjust="spacingAndGlyphs">61</text>
<text x="313.2" y="445.8" font-size="12.4" fill="#000" textLength="83" lengthAdjust="spacingAndGlyphs" text-anchor="end">2016.01.08 15:40</text>
<text x="413.2" y="445.8" font-size="12.4" fill="#000" textLength="27.5" lengthAdjust="spacingAndGlyphs" text-anchor="end">close</text>
<text x="511" y="445.8" font-size="12.4" fill="#000" textLength="11" lengthAdjust="spacingAndGlyphs" text-anchor="end">25</text>
<text x="599.3" y="445.8" font-size="12.4" fill="#000" textLength="20" lengthAdjust="spacingAndGlyphs" text-anchor="end">1.82</text>
<text x="731.7" y="445.8" font-size="12.4" fill="#000" textLength="38" lengthAdjust="spacingAndGlyphs" text-anchor="end">1.08050</text>
<text x="863.2" y="445.8" font-size="12.4" fill="#000" textLength="38" lengthAdjust="spacingAndGlyphs" text-anchor="end">1.09633</text>
<text x="1161" y="445.8" font-size="12.4" fill="#000" textLength="38" lengthAdjust="spacingAndGlyphs" text-anchor="end">1279.46</text>
<text x="1332.8" y="445.8" font-size="12.4" fill="#000" textLength="38" lengthAdjust="spacingAndGlyphs" text-anchor="end">2200.56</text>
<text x="31" y="465.8" font-size="12.4" fill="#000" textLength="11.4" lengthAdjust="spacingAndGlyphs">62</text>
<text x="313.2" y="465.8" font-size="12.4" fill="#000" textLength="83" lengthAdjust="spacingAndGlyphs" text-anchor="end">2016.01.08 15:40</text>
<text x="413.2" y="465.8" font-size="12.4" fill="#000" textLength="27.5" lengthAdjust="spacingAndGlyphs" text-anchor="end">close</text>
<text x="511" y="465.8" font-size="12.4" fill="#000" textLength="11" lengthAdjust="spacingAndGlyphs" text-anchor="end">24</text>
<text x="599.3" y="465.8" font-size="12.4" fill="#000" textLength="20" lengthAdjust="spacingAndGlyphs" text-anchor="end">1.37</text>
<text x="731.7" y="465.8" font-size="12.4" fill="#000" textLength="38" lengthAdjust="spacingAndGlyphs" text-anchor="end">1.08028</text>
<text x="995.7" y="465.8" font-size="12.4" fill="#000" textLength="38" lengthAdjust="spacingAndGlyphs" text-anchor="end">1.09633</text>
<text x="1161" y="465.8" font-size="12.4" fill="#000" textLength="43" lengthAdjust="spacingAndGlyphs" text-anchor="end">-1294.65</text>
<text x="1332.8" y="465.8" font-size="12.4" fill="#000" textLength="32" lengthAdjust="spacingAndGlyphs" text-anchor="end">905.91</text>
<text x="31" y="485.8" font-size="12.4" fill="#000" textLength="11.4" lengthAdjust="spacingAndGlyphs">63</text>
<text x="313.2" y="485.8" font-size="12.4" fill="#000" textLength="83" lengthAdjust="spacingAndGlyphs" text-anchor="end">2016.01.08 15:40</text>
<text x="413.2" y="485.8" font-size="12.4" fill="#000" textLength="27.5" lengthAdjust="spacingAndGlyphs" text-anchor="end">close</text>
<text x="511" y="485.8" font-size="12.4" fill="#000" textLength="11" lengthAdjust="spacingAndGlyphs" text-anchor="end">23</text>
<text x="599.3" y="485.8" font-size="12.4" fill="#000" textLength="20" lengthAdjust="spacingAndGlyphs" text-anchor="end">1.03</text>
<text x="731.7" y="485.8" font-size="12.4" fill="#000" textLength="38" lengthAdjust="spacingAndGlyphs" text-anchor="end">1.08050</text>
<text x="863.2" y="485.8" font-size="12.4" fill="#000" textLength="38" lengthAdjust="spacingAndGlyphs" text-anchor="end">1.09633</text>
<text x="1161" y="485.8" font-size="12.4" fill="#000" textLength="32" lengthAdjust="spacingAndGlyphs" text-anchor="end">724.09</text>
<text x="1332.8" y="485.8" font-size="12.4" fill="#000" textLength="38" lengthAdjust="spacingAndGlyphs" text-anchor="end">1630.00</text>
<text x="31" y="505.8" font-size="12.4" fill="#000" textLength="11.4" lengthAdjust="spacingAndGlyphs">64</text>
<text x="313.2" y="505.8" font-size="12.4" fill="#000" textLength="83" lengthAdjust="spacingAndGlyphs" text-anchor="end">2016.01.08 15:40</text>
<text x="413.2" y="505.8" font-size="12.4" fill="#000" textLength="27.5" lengthAdjust="spacingAndGlyphs" text-anchor="end">close</text>
<text x="511" y="505.8" font-size="12.4" fill="#000" textLength="11" lengthAdjust="spacingAndGlyphs" text-anchor="end">22</text>
<text x="599.3" y="505.8" font-size="12.4" fill="#000" textLength="20" lengthAdjust="spacingAndGlyphs" text-anchor="end">0.77</text>
<text x="731.7" y="505.8" font-size="12.4" fill="#000" textLength="38" lengthAdjust="spacingAndGlyphs" text-anchor="end">1.08028</text>
<text x="995.7" y="505.8" font-size="12.4" fill="#000" textLength="38" lengthAdjust="spacingAndGlyphs" text-anchor="end">1.09633</text>
<text x="1161" y="505.8" font-size="12.4" fill="#000" textLength="37" lengthAdjust="spacingAndGlyphs" text-anchor="end">-727.65</text>
<text x="1332.8" y="505.8" font-size="12.4" fill="#000" textLength="32" lengthAdjust="spacingAndGlyphs" text-anchor="end">902.35</text>
<text x="31" y="525.8" font-size="12.4" fill="#000" textLength="11.4" lengthAdjust="spacingAndGlyphs">65</text>
<text x="313.2" y="525.8" font-size="12.4" fill="#000" textLength="83" lengthAdjust="spacingAndGlyphs" text-anchor="end">2016.01.08 15:40</text>
<text x="413.2" y="525.8" font-size="12.4" fill="#000" textLength="27.5" lengthAdjust="spacingAndGlyphs" text-anchor="end">close</text>
<text x="511" y="525.8" font-size="12.4" fill="#000" textLength="11" lengthAdjust="spacingAndGlyphs" text-anchor="end">21</text>
<text x="599.3" y="525.8" font-size="12.4" fill="#000" textLength="20" lengthAdjust="spacingAndGlyphs" text-anchor="end">0.58</text>
<text x="731.7" y="525.8" font-size="12.4" fill="#000" textLength="38" lengthAdjust="spacingAndGlyphs" text-anchor="end">1.08050</text>
<text x="863.2" y="525.8" font-size="12.4" fill="#000" textLength="38" lengthAdjust="spacingAndGlyphs" text-anchor="end">1.09633</text>
<text x="1161" y="525.8" font-size="12.4" fill="#000" textLength="32" lengthAdjust="spacingAndGlyphs" text-anchor="end">407.74</text>
<text x="1332.8" y="525.8" font-size="12.4" fill="#000" textLength="38" lengthAdjust="spacingAndGlyphs" text-anchor="end">1310.09</text>
<text x="31" y="545.8" font-size="12.4" fill="#000" textLength="11.4" lengthAdjust="spacingAndGlyphs">66</text>
<text x="313.2" y="545.8" font-size="12.4" fill="#000" textLength="83" lengthAdjust="spacingAndGlyphs" text-anchor="end">2016.01.08 15:40</text>
<text x="413.2" y="545.8" font-size="12.4" fill="#000" textLength="27.5" lengthAdjust="spacingAndGlyphs" text-anchor="end">close</text>
<text x="511" y="545.8" font-size="12.4" fill="#000" textLength="11" lengthAdjust="spacingAndGlyphs" text-anchor="end">20</text>
<text x="599.3" y="545.8" font-size="12.4" fill="#000" textLength="20" lengthAdjust="spacingAndGlyphs" text-anchor="end">0.25</text>
<text x="731.7" y="545.8" font-size="12.4" fill="#000" textLength="38" lengthAdjust="spacingAndGlyphs" text-anchor="end">1.08028</text>
<text x="995.7" y="545.8" font-size="12.4" fill="#000" textLength="38" lengthAdjust="spacingAndGlyphs" text-anchor="end">1.09633</text>
<text x="1161" y="545.8" font-size="12.4" fill="#000" textLength="37" lengthAdjust="spacingAndGlyphs" text-anchor="end">-236.25</text>
<text x="1332.8" y="545.8" font-size="12.4" fill="#000" textLength="38" lengthAdjust="spacingAndGlyphs" text-anchor="end">1073.84</text>
<text x="31" y="565.8" font-size="12.4" fill="#000" textLength="11.4" lengthAdjust="spacingAndGlyphs">67</text>
<text x="313.2" y="565.8" font-size="12.4" fill="#000" textLength="83" lengthAdjust="spacingAndGlyphs" text-anchor="end">2016.01.08 15:40</text>
<text x="413.2" y="565.8" font-size="12.4" fill="#000" textLength="16.4" lengthAdjust="spacingAndGlyphs" text-anchor="end">sell</text>
<text x="511" y="565.8" font-size="12.4" fill="#000" textLength="11" lengthAdjust="spacingAndGlyphs" text-anchor="end">27</text>
<text x="599.3" y="565.8" font-size="12.4" fill="#000" textLength="20" lengthAdjust="spacingAndGlyphs" text-anchor="end">0.25</text>
<text x="731.7" y="565.8" font-size="12.4" fill="#000" textLength="38" lengthAdjust="spacingAndGlyphs" text-anchor="end">1.08028</text>
<text x="995.7" y="565.8" font-size="12.4" fill="#000" textLength="38" lengthAdjust="spacingAndGlyphs" text-anchor="end">1.07368</text>
<defs><linearGradient id="dg" x1="0" x2="1" y1="0" y2="1"><stop offset="0" stop-color="#ffffff"/><stop offset="1" stop-color="#e4e4e4"/></linearGradient></defs>
<g transform="translate(12,395)"><path d="M1.2 0.5 H8.3 L11.5 3.7 V12.6 Q11.5 13.4 10.7 13.4 H1.2 Q0.5 13.4 0.5 12.6 V1.2 Q0.5 0.5 1.2 0.5 Z" fill="url(#dg)" stroke="#6a6a6a" stroke-width="1"/><path d="M8.3 0.8 V3.7 H11.3" fill="#f4f4f4" stroke="#8a8a8a" stroke-width="0.8"/><path d="M2.3 2.7 H6.9 M4.6 2.7 V7" stroke="#111" stroke-width="1.1" fill="none"/><circle cx="10.5" cy="11" r="3.3" fill="#2792e8" stroke="#0c62b4" stroke-width="0.6"/><circle cx="9.7" cy="10.1" r="1.3" fill="#86c8fa"/></g>
<g transform="translate(12,415)"><path d="M1.2 0.5 H8.3 L11.5 3.7 V12.6 Q11.5 13.4 10.7 13.4 H1.2 Q0.5 13.4 0.5 12.6 V1.2 Q0.5 0.5 1.2 0.5 Z" fill="url(#dg)" stroke="#6a6a6a" stroke-width="1"/><path d="M8.3 0.8 V3.7 H11.3" fill="#f4f4f4" stroke="#8a8a8a" stroke-width="0.8"/><path d="M2.3 2.7 H6.9 M4.6 2.7 V7" stroke="#111" stroke-width="1.1" fill="none"/><circle cx="10.5" cy="11" r="3.3" fill="#2792e8" stroke="#0c62b4" stroke-width="0.6"/><circle cx="9.7" cy="10.1" r="1.3" fill="#86c8fa"/></g>
<g transform="translate(12,435)"><rect x="0.5" y="0.5" width="11" height="13" rx="1.6" fill="url(#dg)" stroke="#6a6a6a" stroke-width="1"/><path d="M6.05 4 L9.9 8 H7.6 V11 H4.5 V8 H2.2 Z" fill="#1cb834" stroke="#0c8a1c" stroke-width="0.5"/></g>
<g transform="translate(12,455)"><rect x="0.5" y="0.5" width="11" height="13" rx="1.6" fill="url(#dg)" stroke="#6a6a6a" stroke-width="1"/><path d="M6.05 11.1 L9.9 7.1 H7.6 V4.4 H4.5 V7.1 H2.2 Z" fill="#ee4212" stroke="#b42808" stroke-width="0.5"/></g>
<g transform="translate(12,475)"><rect x="0.5" y="0.5" width="11" height="13" rx="1.6" fill="url(#dg)" stroke="#6a6a6a" stroke-width="1"/><path d="M6.05 4 L9.9 8 H7.6 V11 H4.5 V8 H2.2 Z" fill="#1cb834" stroke="#0c8a1c" stroke-width="0.5"/></g>
<g transform="translate(12,495)"><rect x="0.5" y="0.5" width="11" height="13" rx="1.6" fill="url(#dg)" stroke="#6a6a6a" stroke-width="1"/><path d="M6.05 11.1 L9.9 7.1 H7.6 V4.4 H4.5 V7.1 H2.2 Z" fill="#ee4212" stroke="#b42808" stroke-width="0.5"/></g>
<g transform="translate(12,515)"><rect x="0.5" y="0.5" width="11" height="13" rx="1.6" fill="url(#dg)" stroke="#6a6a6a" stroke-width="1"/><path d="M6.05 4 L9.9 8 H7.6 V11 H4.5 V8 H2.2 Z" fill="#1cb834" stroke="#0c8a1c" stroke-width="0.5"/></g>
<g transform="translate(12,535)"><rect x="0.5" y="0.5" width="11" height="13" rx="1.6" fill="url(#dg)" stroke="#6a6a6a" stroke-width="1"/><path d="M6.05 11.1 L9.9 7.1 H7.6 V4.4 H4.5 V7.1 H2.2 Z" fill="#ee4212" stroke="#b42808" stroke-width="0.5"/></g>
<g transform="translate(12,555)"><path d="M1.2 0.5 H8.3 L11.5 3.7 V12.6 Q11.5 13.4 10.7 13.4 H1.2 Q0.5 13.4 0.5 12.6 V1.2 Q0.5 0.5 1.2 0.5 Z" fill="url(#dg)" stroke="#6a6a6a" stroke-width="1"/><path d="M8.3 0.8 V3.7 H11.3" fill="#f4f4f4" stroke="#8a8a8a" stroke-width="0.8"/><circle cx="10.6" cy="11.1" r="3.3" fill="#e8401a" stroke="#a82408" stroke-width="0.6"/><circle cx="9.8" cy="10.2" r="1.2" fill="#ff8e66"/></g>
<path d="M1343.6 378.6 L1347.3 375 L1351 378.6 Z" fill="#505050"/>
<path d="M1343.6 568.8 L1347.4 572.8 L1351.2 568.8 Z" fill="#505050"/>
<defs><linearGradient id="tg" x1="0" x2="1" y1="0" y2="0"><stop offset="0" stop-color="#fbfbfb"/><stop offset="1" stop-color="#dedede"/></linearGradient></defs>
<rect x="1340.3" y="539.8" width="13" height="20.2" rx="2" fill="url(#tg)" stroke="#8e8e8e" stroke-width="1"/>
<g shape-rendering="crispEdges"><rect x="1343" y="546" width="7" height="1" fill="#555"/><rect x="1343" y="549" width="7" height="1" fill="#555"/><rect x="1343" y="552" width="7" height="1" fill="#555"/></g>
<text x="21.1" y="592.9" font-size="12.4" fill="#6e6e6e" textLength="41.5" lengthAdjust="spacingAndGlyphs">Settings</text>
<text x="83.2" y="592.9" font-size="12.4" fill="#000" textLength="36.8" lengthAdjust="spacingAndGlyphs">Results</text>
<text x="140.3" y="592.9" font-size="12.4" fill="#6e6e6e" textLength="31.1" lengthAdjust="spacingAndGlyphs">Graph</text>
<text x="192.5" y="592.9" font-size="12.4" fill="#6e6e6e" textLength="34" lengthAdjust="spacingAndGlyphs">Report</text>
<text x="246.6" y="592.9" font-size="12.4" fill="#6e6e6e" textLength="37.8" lengthAdjust="spacingAndGlyphs">Journal</text>
<g shape-rendering="crispEdges"><rect x="182" y="583" width="1" height="14" fill="#5a5a5a"/><rect x="237" y="583" width="1" height="14" fill="#5a5a5a"/><rect x="295" y="583" width="1" height="14" fill="#5a5a5a"/></g>
<clipPath id="bc"><rect x="1359" y="500" width="10" height="104"/></clipPath>
<ellipse cx="1345" cy="545.7" rx="30" ry="27" fill="#000" clip-path="url(#bc)"/>
<defs><filter id="bl" x="-5%" y="-20%" width="110%" height="140%"><feGaussianBlur stdDeviation="1.2"/></filter></defs>
<ellipse cx="588.6" cy="565.8" rx="224.4" ry="33.7" fill="none" stroke="#8a7484" stroke-opacity="0.35" stroke-width="5" filter="url(#bl)"/>
<ellipse cx="587.6" cy="564.8" rx="224.3" ry="33.7" fill="none" stroke="#947c8c" stroke-width="4.3"/>
<ellipse cx="1311.5" cy="542.8" rx="54.8" ry="27" fill="none" stroke="#8a7484" stroke-opacity="0.35" stroke-width="5" filter="url(#bl)"/>
<ellipse cx="1310.5" cy="541.8" rx="54.8" ry="27" fill="none" stroke="#947c8c" stroke-width="4.2"/>
</svg>
</body></html>
